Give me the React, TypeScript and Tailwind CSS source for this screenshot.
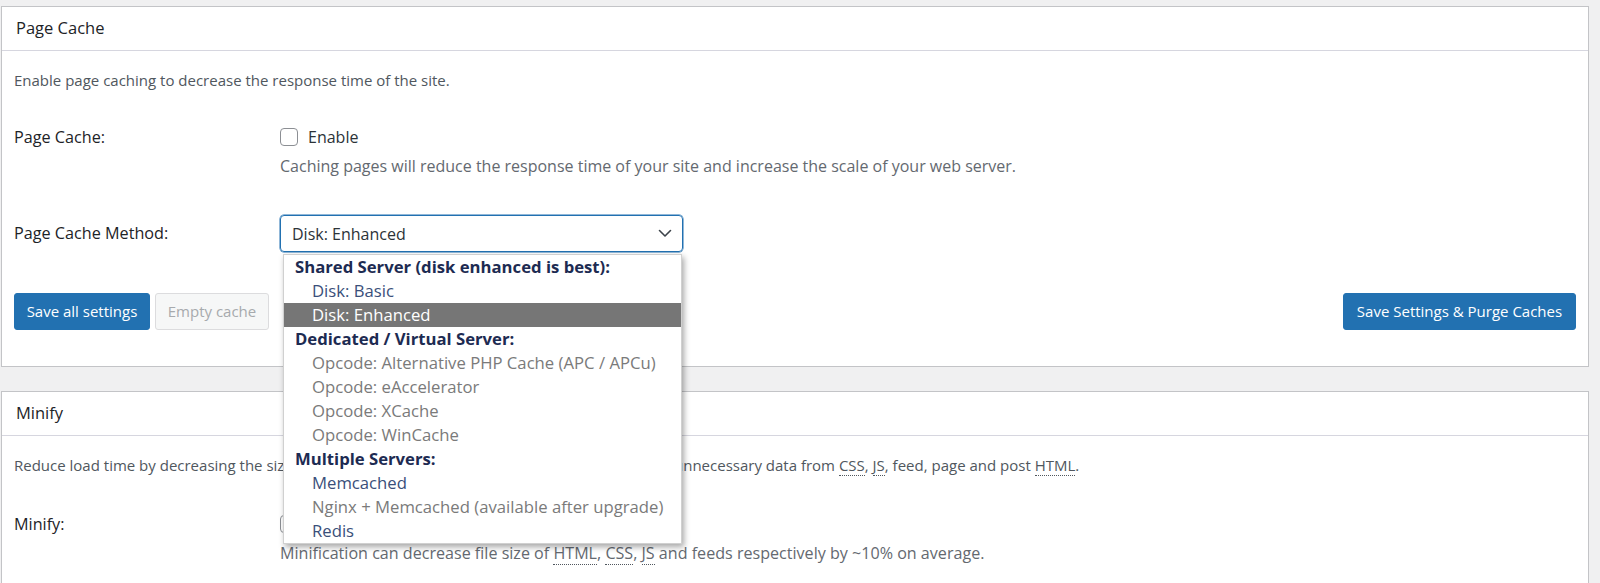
import React from "react";

function Abbr({ children }: { children: React.ReactNode }) {
  return <span className="border-b border-dotted border-[#50575e]">{children}</span>;
}

function Checkbox() {
  return (
    <span className="inline-block w-[18px] h-[18px] rounded-[4px] border border-[#8c8f94] bg-white shrink-0" />
  );
}

function Chevron() {
  return (
    <svg width="14" height="9" viewBox="0 0 14 9" fill="none">
      <path d="M1.5 1.5 L7 7 L12.5 1.5" stroke="#3c434a" strokeWidth="1.6" strokeLinecap="round" strokeLinejoin="round" />
    </svg>
  );
}

type Opt = { label: string; kind: "group" | "item" | "disabled" | "selected" };

const options: Opt[] = [
  { label: "Shared Server (disk enhanced is best):", kind: "group" },
  { label: "Disk: Basic", kind: "item" },
  { label: "Disk: Enhanced", kind: "selected" },
  { label: "Dedicated / Virtual Server:", kind: "group" },
  { label: "Opcode: Alternative PHP Cache (APC / APCu)", kind: "disabled" },
  { label: "Opcode: eAccelerator", kind: "disabled" },
  { label: "Opcode: XCache", kind: "disabled" },
  { label: "Opcode: WinCache", kind: "disabled" },
  { label: "Multiple Servers:", kind: "group" },
  { label: "Memcached", kind: "item" },
  { label: "Nginx + Memcached (available after upgrade)", kind: "disabled" },
  { label: "Redis", kind: "item" },
];

function Dropdown() {
  return (
    <div className="absolute left-[3px] top-[39px] w-[399px] bg-white border border-[#d0d0d0] shadow-[2px_3px_6px_rgba(0,0,0,0.35)] z-10 text-[16.7px]">
      {options.map((o) => {
        if (o.kind === "group")
          return (
            <div key={o.label} className="h-[24px] leading-[24px] pl-[11px] font-bold text-[#1d2b52] whitespace-nowrap">
              {o.label}
            </div>
          );
        if (o.kind === "selected")
          return (
            <div key={o.label} className="h-[24px] leading-[24px] pl-[28px] bg-[#767676] text-white whitespace-nowrap">
              {o.label}
            </div>
          );
        return (
          <div
            key={o.label}
            className={
              "h-[24px] leading-[24px] pl-[28px] whitespace-nowrap " +
              (o.kind === "disabled" ? "text-[#7a7a7a]" : "text-[#3a4f7a]")
            }
          >
            {o.label}
          </div>
        );
      })}
    </div>
  );
}

export default function App() {
  return (
    <div className="w-[1600px] h-[583px] overflow-hidden bg-[#f0f0f1] pt-[6px] pl-[1px] pr-[11px] font-['Open_Sans',sans-serif] text-[#1d2327]">
      {/* Page Cache panel */}
      <div className="bg-white border border-[#c3c4c7]">
        <div className="h-[44px] border-b border-[#d6d6df] pl-[14px] flex items-center text-[16.5px] text-[#1d2327]">
          Page Cache
        </div>
        <div className="px-[12px] pb-[36px]">
          <div className="mt-[19px] h-[20px] leading-[20px] text-[15px] text-[#50575e]">
            Enable page caching to decrease the response time of the site.
          </div>
          <div className="mt-[37px] flex">
            <div className="w-[266px] h-[20px] leading-[20px] text-[16.2px] font-medium text-[#1d2327]">Page Cache:</div>
            <div>
              <div className="h-[20px] flex items-center gap-[10px]">
                <Checkbox />
                <span className="text-[16px] leading-[20px] text-[#2c3338]">Enable</span>
              </div>
              <div className="mt-[8px] h-[22px] leading-[22px] text-[16px] text-[#646970]">
                Caching pages will reduce the response time of your site and increase the scale of your web server.
              </div>
            </div>
          </div>
          <div className="mt-[38px] flex items-center">
            <div className="w-[266px] text-[16.2px] font-medium text-[#1d2327]">Page Cache Method:</div>
            <div className="relative">
              <div className="w-[403px] h-[37px] rounded-[4px] border-[1.5px] border-[#2271b1] shadow-[0_0_0_0.5px_#2271b1] flex items-center justify-between pl-[11px] pr-[10px] text-[16px] text-[#2c3338]">
                <span>Disk: Enhanced</span>
                <Chevron />
              </div>
              <Dropdown />
            </div>
          </div>
          <div className="mt-[41px] flex items-center">
            <div className="flex gap-[5px]">
              <button className="h-[37px] w-[136px] rounded-[3px] bg-[#2271b1] border border-[#2271b1] text-white text-[15px]">
                Save all settings
              </button>
              <button className="h-[37px] w-[114px] rounded-[3px] bg-[#f6f7f7] border border-[#dcdcde] text-[#a7aaad] text-[15px]">
                Empty cache
              </button>
            </div>
            <div className="flex-1" />
            <button className="h-[37px] w-[233px] rounded-[3px] bg-[#2271b1] border border-[#2271b1] text-white text-[15px]">
              Save Settings &amp; Purge Caches
            </button>
          </div>
        </div>
      </div>

      {/* Minify panel */}
      <div className="mt-[24px] bg-white border border-[#c3c4c7] h-[300px]">
        <div className="h-[44px] border-b border-[#d6d6df] pl-[14px] flex items-center text-[16.5px] text-[#1d2327]">
          Minify
        </div>
        <div className="px-[12px]">
          <div className="mt-[19px] h-[20px] leading-[20px] text-[15px] text-[#50575e] whitespace-nowrap">
            Reduce load time by decreasing the size and number of <Abbr>CSS</Abbr> and <Abbr>JS</Abbr> files.
            Automatically remove unnecessary data from <Abbr>CSS</Abbr>, <Abbr>JS</Abbr>, feed, page and post{" "}
            <Abbr>HTML</Abbr>.
          </div>
          <div className="mt-[39px] flex">
            <div className="w-[266px] h-[20px] leading-[20px] text-[16.2px] font-medium text-[#1d2327]">Minify:</div>
            <div>
              <div className="h-[20px] flex items-center gap-[10px]">
                <Checkbox />
              </div>
              <div className="mt-[8px] h-[22px] leading-[22px] text-[16.1px] text-[#646970]">
                Minification can decrease file size of <Abbr>HTML</Abbr>, <Abbr>CSS</Abbr>, <Abbr>JS</Abbr> and feeds
                respectively by ~10% on average.
              </div>
            </div>
          </div>
        </div>
      </div>
    </div>
  );
}
